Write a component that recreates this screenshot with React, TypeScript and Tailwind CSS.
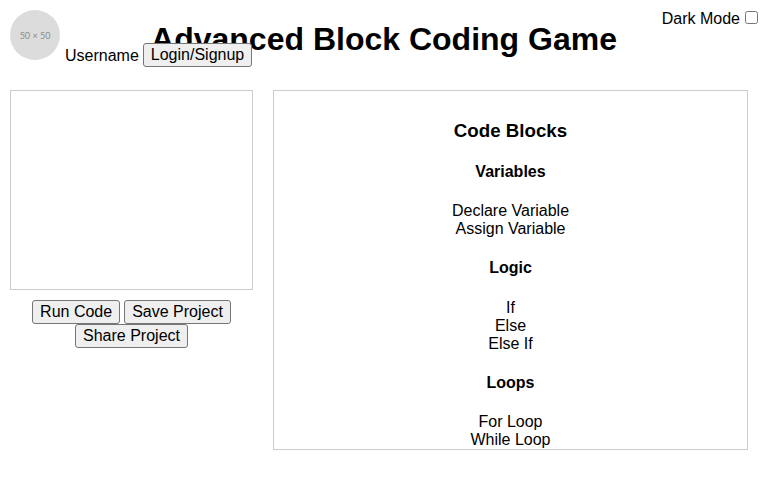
import React from 'react';

interface BlockGroup {
  title: string;
  items: string[];
}

const BLOCK_GROUPS: BlockGroup[] = [
  { title: 'Variables', items: ['Declare Variable', 'Assign Variable'] },
  { title: 'Logic', items: ['If', 'Else', 'Else If'] },
  { title: 'Loops', items: ['For Loop', 'While Loop'] },
];

const PROJECT_ACTIONS = ['Run Code', 'Save Project', 'Share Project'];

const NativeButton: React.FC<{ label: string }> = ({ label }) => (
  <button
    type="button"
    className="h-6 rounded-[3px] border border-[#767676] bg-[#efefef] px-[7px] text-base leading-[normal] text-black"
  >
    {label}
  </button>
);

const App: React.FC = () => {
  return (
    <div className="relative flow-root min-h-[480px] bg-white font-['Liberation_Sans',Arial,sans-serif] text-base leading-[normal] text-black">
      <header className="text-center">
        <h1 className="my-[21.44px] text-[32px] leading-[normal] font-bold">
          Advanced Block Coding Game
        </h1>

        {/* Avatar placeholder */}
        <div className="absolute top-[10px] left-[10px] flex h-[50px] w-[50px] items-center justify-center rounded-full bg-[#dcdcdc] font-['Lato',sans-serif] text-[9px] text-[#8c8c8c]">
          50 × 50
        </div>

        {/* User login */}
        <div className="absolute top-[43px] left-[65px] flex items-center gap-[4px]">
          <span className="mt-[2px]">Username</span>
          <NativeButton label="Login/Signup" />
        </div>

        {/* Theme toggle */}
        <label className="absolute top-[10px] right-[10px] flex items-start gap-[5px]">
          <span>Dark Mode</span>
          <input type="checkbox" className="m-0 mt-[1px] h-[13px] w-[13px]" />
        </label>
      </header>

      <main className="flex gap-5 p-[10px]">
        <section className="w-[243px]">
          <div className="h-[200px] border border-[#cccccc] bg-white" />
          <div className="mt-[10px] flex flex-wrap justify-center gap-x-1">
            {PROJECT_ACTIONS.map((action) => (
              <NativeButton key={action} label={action} />
            ))}
          </div>
        </section>

        <section className="h-[360px] w-[475px] overflow-hidden border border-[#cccccc] p-[10px] text-center">
          <h3 className="my-[18.72px] text-[18.72px] leading-[normal] font-bold">Code Blocks</h3>
          {BLOCK_GROUPS.map((group) => (
            <div key={group.title}>
              <h4 className="my-[21.28px] text-base leading-[normal] font-bold">{group.title}</h4>
              {group.items.map((item) => (
                <div key={item}>{item}</div>
              ))}
            </div>
          ))}
        </section>
      </main>
    </div>
  );
};

export default App;
